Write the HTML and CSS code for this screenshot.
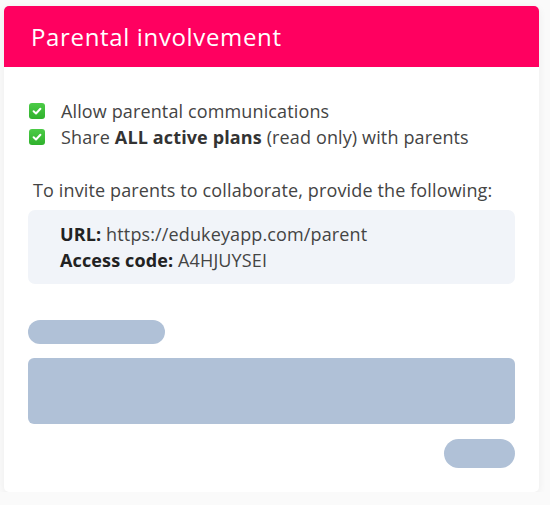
FILE: index.html
```html
<!DOCTYPE html>
<html>
<head>
<meta charset="utf-8">
<link rel="stylesheet" href="styles.css">
</head>
<body>
<div class="card">
  <div class="card-header">Parental involvement</div>
  <div class="card-body">
    <ul class="checks">
      <li><span class="cb"><svg viewBox="0 0 16 16" width="16" height="16"><path d="M4.6 8.3 L7 10.5 L11.4 5.8" fill="none" stroke="#fff" stroke-width="2" stroke-linecap="round" stroke-linejoin="round"/></svg></span><span>Allow parental communications</span></li>
      <li><span class="cb"><svg viewBox="0 0 16 16" width="16" height="16"><path d="M4.6 8.3 L7 10.5 L11.4 5.8" fill="none" stroke="#fff" stroke-width="2" stroke-linecap="round" stroke-linejoin="round"/></svg></span><span>Share <b>ALL active plans</b> (read only) with parents</span></li>
    </ul>
    <p class="invite">To invite parents to collaborate, provide the following:</p>
    <div class="info">
      <div><b>URL:</b> https://edukeyapp.com/parent</div>
      <div><b>Access code:</b> A4HJUYSEI</div>
    </div>
    <div class="skeleton">
      <div class="sk-label"></div>
      <div class="sk-box"></div>
      <div class="sk-actions"><div class="sk-btn"></div></div>
    </div>
  </div>
</div>
</body>
</html>
```
FILE: styles.css
```css
* { box-sizing: border-box; }
html, body { margin: 0; padding: 0; }
body {
  background: #fafafa;
  font-family: "Open Sans", sans-serif;
  color: #444;
  padding: 6px 11px 0 4px;
}
.card {
  background: #fff;
  border-radius: 5px;
  box-shadow: 0 2px 8px rgba(0,0,0,0.06);
  overflow: hidden;
  height: 486px;
}
.card-header {
  background: #ff0060;
  color: #fff;
  height: 61px;
  padding-left: 27px;
  font-size: 24px;
  letter-spacing: 0.65px;
  line-height: 61px;
}
.card-body {
  padding: 31px 24px 0 24px;
  letter-spacing: 0.13px;
}
.checks {
  list-style: none;
  margin: 0;
  padding: 0;
  font-size: 18px;
  line-height: 26px;
}
.checks li {
  display: flex;
  align-items: center;
}
.cb {
  flex: none;
  width: 16px;
  height: 16px;
  border-radius: 3px;
  background: linear-gradient(#4ccb47, #2fb12c);
  margin: 0 16px 0 1px;
  display: inline-flex;
}
.checks b { font-weight: 700; color: #333; }
.invite {
  margin: 27px 0 0 5px;
  font-size: 18px;
  line-height: 26px;
}
.info {
  margin-top: 7px;
  background: #f1f4f9;
  border-radius: 7px;
  padding: 11px 32px 11px;
  font-size: 18px;
  line-height: 26px;
}
.info b { color: #222; font-weight: 700; }
.skeleton { margin-top: 36px; }
.sk-label {
  width: 137px;
  height: 24px;
  border-radius: 12px;
  background: #b0c1d7;
}
.sk-box {
  margin-top: 14px;
  height: 66px;
  border-radius: 6px;
  background: #b0c1d7;
}
.sk-actions {
  display: flex;
  justify-content: flex-end;
  margin-top: 15px;
}
.sk-btn {
  width: 71px;
  height: 29px;
  border-radius: 15px;
  background: #b0c1d7;
}
```
